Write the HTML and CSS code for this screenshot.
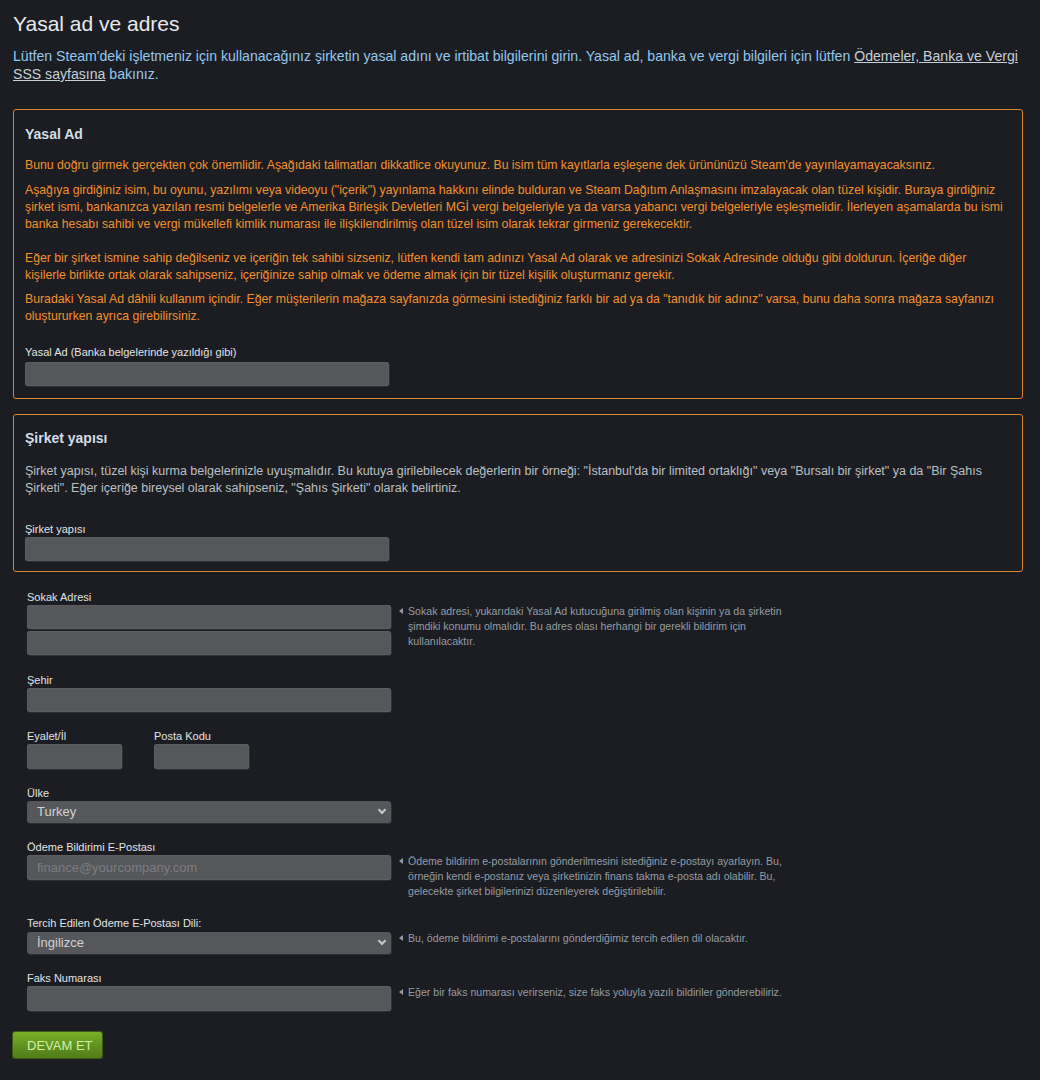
FILE: index.html
```html
<!DOCTYPE html>
<html lang="tr">
<head>
<meta charset="utf-8">
<title>Yasal ad ve adres</title>
<link rel="stylesheet" href="styles.css">
</head>
<body>
<div class="page">
  <h1 class="title">Yasal ad ve adres</h1>
  <p class="intro">Lütfen Steam'deki işletmeniz için kullanacağınız şirketin yasal adını ve irtibat bilgilerini girin. Yasal ad, banka ve vergi bilgileri için lütfen <a href="#" class="link">Ödemeler, Banka ve Vergi</a> <a href="#" class="link">SSS sayfasına</a> bakınız.</p>

  <section class="box box-legal">
    <h2 class="box-title">Yasal Ad</h2>
    <p class="warn">Bunu doğru girmek gerçekten çok önemlidir. Aşağıdaki talimatları dikkatlice okuyunuz. Bu isim tüm kayıtlarla eşleşene dek ürününüzü Steam'de yayınlayamayacaksınız.</p>
    <p class="warn">Aşağıya girdiğiniz isim, bu oyunu, yazılımı veya videoyu ("içerik") yayınlama hakkını elinde bulduran ve Steam Dağıtım Anlaşmasını imzalayacak olan tüzel kişidir. Buraya girdiğiniz şirket ismi, bankanızca yazılan resmi belgelerle ve Amerika Birleşik Devletleri MGİ vergi belgeleriyle ya da varsa yabancı vergi belgeleriyle eşleşmelidir. İlerleyen aşamalarda bu ismi banka hesabı sahibi ve vergi mükellefi kimlik numarası ile ilişkilendirilmiş olan tüzel isim olarak tekrar girmeniz gerekecektir.<br><br>Eğer bir şirket ismine sahip değilseniz ve içeriğin tek sahibi sizseniz, lütfen kendi tam adınızı Yasal Ad olarak ve adresinizi Sokak Adresinde olduğu gibi doldurun. İçeriğe diğer kişilerle birlikte ortak olarak sahipseniz, içeriğinize sahip olmak ve ödeme almak için bir tüzel kişilik oluşturmanız gerekir.</p>
    <p class="warn">Buradaki Yasal Ad dâhili kullanım içindir. Eğer müşterilerin mağaza sayfanızda görmesini istediğiniz farklı bir ad ya da "tanıdık bir adınız" varsa, bunu daha sonra mağaza sayfanızı oluştururken ayrıca girebilirsiniz.</p>
    <label class="label box-label">Yasal Ad (Banka belgelerinde yazıldığı gibi)</label>
    <input class="input" type="text">
  </section>

  <section class="box box-structure">
    <h2 class="box-title">Şirket yapısı</h2>
    <p class="info">Şirket yapısı, tüzel kişi kurma belgelerinizle uyuşmalıdır. Bu kutuya girilebilecek değerlerin bir örneği: "İstanbul'da bir limited ortaklığı" veya "Bursalı bir şirket" ya da "Bir Şahıs Şirketi". Eğer içeriğe bireysel olarak sahipseniz, "Şahıs Şirketi" olarak belirtiniz.</p>
    <label class="label info-label">Şirket yapısı</label>
    <input class="input" type="text">
  </section>

  <div class="form">
    <div class="field field-street">
      <label class="label">Sokak Adresi</label>
      <div class="row">
        <div class="controls">
          <input class="input" type="text">
          <input class="input" type="text">
        </div>
        <p class="help">Sokak adresi, yukarıdaki Yasal Ad kutucuğuna girilmiş olan kişinin ya da şirketin şimdiki konumu olmalıdır. Bu adres olası herhangi bir gerekli bildirim için kullanılacaktır.</p>
      </div>
    </div>

    <div class="field">
      <label class="label">Şehir</label>
      <input class="input" type="text">
    </div>

    <div class="field pair">
      <div class="sub">
        <label class="label">Eyalet/İl</label>
        <input class="input small" type="text">
      </div>
      <div class="sub">
        <label class="label">Posta Kodu</label>
        <input class="input small" type="text">
      </div>
    </div>

    <div class="field">
      <label class="label">Ülke</label>
      <div class="select">Turkey<span class="chev"></span></div>
    </div>

    <div class="field">
      <label class="label">Ödeme Bildirimi E-Postası</label>
      <div class="row">
        <div class="controls">
          <input class="input tall" type="text" placeholder="finance@yourcompany.com">
        </div>
        <p class="help">Ödeme bildirim e-postalarının gönderilmesini istediğiniz e-postayı ayarlayın. Bu, örneğin kendi e-postanız veya şirketinizin finans takma e-posta adı olabilir. Bu, gelecekte şirket bilgilerinizi düzenleyerek değiştirilebilir.</p>
      </div>
    </div>

    <div class="field">
      <label class="label lang-label">Tercih Edilen Ödeme E-Postası Dili:</label>
      <div class="row">
        <div class="controls">
          <div class="select">İngilizce<span class="chev"></span></div>
        </div>
        <p class="help">Bu, ödeme bildirimi e-postalarını gönderdiğimiz tercih edilen dil olacaktır.</p>
      </div>
    </div>

    <div class="field">
      <label class="label">Faks Numarası</label>
      <div class="row">
        <div class="controls">
          <input class="input tall" type="text">
        </div>
        <p class="help">Eğer bir faks numarası verirseniz, size faks yoluyla yazılı bildiriler gönderebiliriz.</p>
      </div>
    </div>
  </div>

  <button class="btn" type="button">DEVAM ET</button>
</div>
</body>
</html>
```

FILE: styles.css
```css
* { box-sizing: border-box; }
html, body { margin: 0; padding: 0; background: #1b1d22; }
body {
  font-family: "Liberation Sans", Arial, sans-serif;
  color: #c6d4df;
  height: 1080px;
  overflow: hidden;
}
.page { width: 1040px; padding: 9px 17px 0 13px; }
.title {
  margin: 0;
  font-size: 21px;
  font-weight: normal;
  line-height: 30px;
  color: #e6e9ec;
}
.intro {
  margin: 8px 0 26px;
  font-size: 14.1px;
  line-height: 18px;
  color: #94c8ee;
}
.link { color: #c6d0d8; text-decoration: underline; }

.box {
  border: 1px solid #d9862c;
  border-radius: 3px;
  padding: 15px 11px 11px;
  margin-bottom: 15px;
}
.box-legal { padding-bottom: 12px; }
.box-structure { padding-top: 14px; padding-bottom: 10px; }
.box-title {
  margin: 0 0 14px;
  font-size: 14px;
  font-weight: bold;
  line-height: 18px;
  color: #d3dde6;
}
.warn {
  margin: 0 3px 8px 0;
  font-size: 12.25px;
  line-height: 17px;
  color: #f4902c;
}
.warn:nth-of-type(2) { margin-bottom: 7px; }
.box-structure .box-title { margin-bottom: 16px; }
.info {
  margin: 0;
  font-size: 12.5px;
  line-height: 17px;
  color: #bcc0c4;
}
.label {
  display: block;
  font-size: 11px;
  line-height: 14px;
  color: #e2e4e6;
  margin-bottom: 1px;
}
.box-label { margin-top: 20px; margin-bottom: 3px; }
.info-label { margin-top: 25px; margin-bottom: 1px; }

.input {
  display: block;
  width: 364px;
  height: 24px;
  border: none;
  border-radius: 3px;
  background: #56575b;
  box-shadow: 1px 1px 0 #2d2f34, inset 0 0 0 1px #5c5d61;
  color: #d8d8d8;
  font-family: "Liberation Sans", Arial, sans-serif;
  font-size: 13px;
  padding: 0 10px;
  outline: none;
}
.input::placeholder { color: #7c7d80; }
.input.small { width: 95px; height: 25px; }
.input.tall { height: 25px; }

.form { padding-top: 3px; padding-left: 14px; }
.field { margin-bottom: 17px; }
.field-street { margin-bottom: 18px; }
.row { display: flex; align-items: flex-start; }
.controls { display: flex; flex-direction: column; gap: 2px; width: 364px; flex: none; }
.help {
  position: relative;
  margin: -1px 0 0 17px;
  width: 382px;
  font-size: 10.6px;
  line-height: 15px;
  color: #959ca3;
}
.help::before {
  content: "";
  position: absolute;
  left: -9px;
  top: 4px;
  border-style: solid;
  border-width: 3.5px 4px 3.5px 0;
  border-color: transparent #959ca3 transparent transparent;
}
.pair { display: flex; gap: 32px; }
.lang-label { margin-bottom: 2px; }

.select {
  position: relative;
  width: 364px;
  height: 22px;
  border-radius: 3px;
  background: #56575b;
  box-shadow: 1px 1px 0 #2d2f34;
  color: #d0d2d4;
  font-size: 13px;
  line-height: 22px;
  padding-left: 10px;
}
.chev {
  position: absolute;
  right: 6px;
  top: 6px;
  width: 6px;
  height: 6px;
  border-right: 2px solid #c8c8c8;
  border-bottom: 2px solid #c8c8c8;
  transform: rotate(45deg);
}

.btn {
  margin-top: 4px;
  width: 89px;
  height: 26px;
  border: none;
  border-radius: 2px;
  background: linear-gradient(to bottom, #79b125 0%, #5f9120 55%, #537c19 100%);
  box-shadow: 0 0 0 1px #3b5a12;
  color: #d2f0a8;
  font-family: "Liberation Sans", Arial, sans-serif;
  font-size: 13px;
  text-align: left;
  padding: 0 0 0 14px;
  cursor: pointer;
}
```
